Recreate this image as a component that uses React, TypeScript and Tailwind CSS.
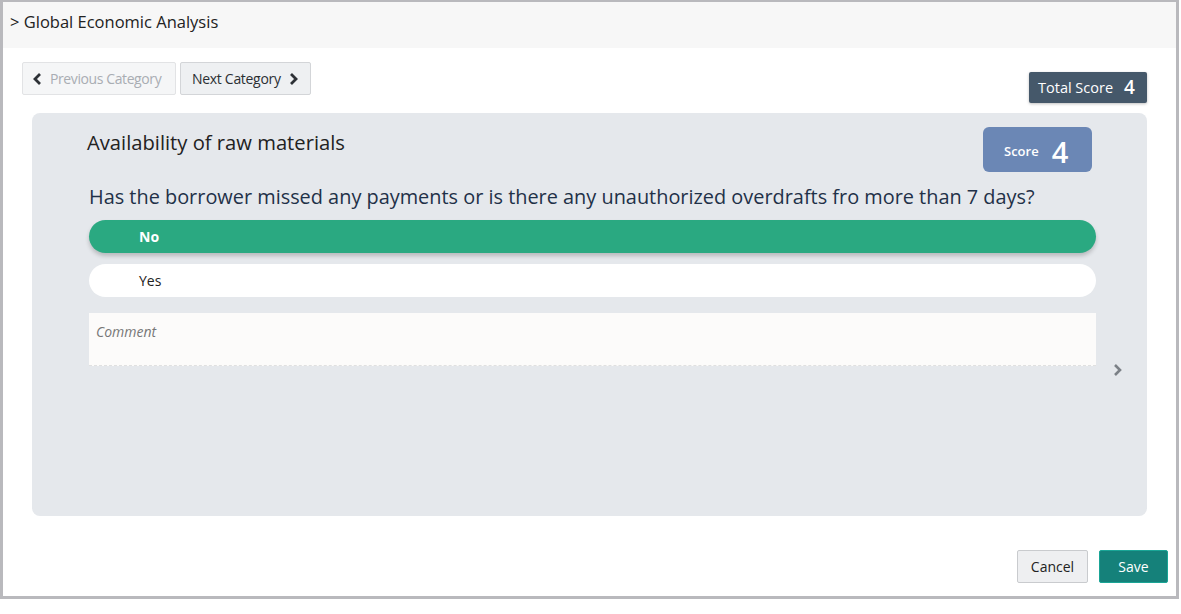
import React from "react";

const font = { fontFamily: '"Open Sans", "Noto Sans", sans-serif' };

export default function App() {
  return (
    <div className="w-[1181px] h-[614px] bg-white" style={font}>
      <div className="w-[1179px] h-[599px] border-l-[3px] border-r-[3px] border-t-2 border-b-[3px] border-[#b9b9bd] flex flex-col bg-white">
        <div className="h-[46px] bg-[#f7f7f7] flex items-center pl-[7px] pb-[5px] text-[16.5px] text-[#222]">
          &gt; Global Economic Analysis
        </div>
        <div className="pl-[19px] pr-[29px] pt-[14px]">
          <div className="flex items-start">
            <button className="h-[33px] w-[154px] flex items-center gap-[7px] pl-[9px] bg-[#f5f6f7] border border-[#e2e3e5] rounded-[2px] text-[14px] text-[#a9adb3] tracking-[-0.4px]">
              <svg width="11" height="14" viewBox="0 0 11 14"><path d="M8 2 L3 7 L8 12" stroke="#2d3136" strokeWidth="2.8" fill="none" /></svg>
              Previous Category
            </button>
            <button className="ml-[4px] h-[33px] w-[131px] flex items-center gap-[7px] pl-[11px] bg-[#eef0f2] border border-[#d3d5d8] rounded-[2px] text-[14px] text-[#2b2f33] tracking-[-0.3px]">
              Next Category
              <svg width="11" height="14" viewBox="0 0 11 14"><path d="M3 2 L8 7 L3 12" stroke="#2d3136" strokeWidth="2.8" fill="none" /></svg>
            </button>
            <div className="ml-auto mt-[10px] h-[31px] w-[118px] bg-[#45586a] rounded-[2px] shadow-[0_1px_3px_rgba(0,0,0,0.25)] flex items-center pl-[9px] text-white">
              <span className="text-[14.5px]">Total Score</span>
              <span className="ml-[11px] text-[19px] font-semibold">4</span>
            </div>
          </div>
          <div className="relative ml-[10px] mt-[10px] h-[403px] bg-[#e5e8ec] rounded-[8px] pt-[14px] pl-[57px] pr-[51px]">
            <div className="flex items-start justify-between">
              <div className="-ml-[2px] text-[20.2px] text-[#222]">Availability of raw materials</div>
              <div className="mr-[4px] h-[45px] w-[109px] bg-[#6b87b5] rounded-[6px] flex items-center pl-[21px] pt-[4px] text-white">
                <span className="text-[13px] font-semibold">Score</span>
                <span className="ml-[13px] text-[29px] font-semibold leading-none">4</span>
              </div>
            </div>
            <div className="mt-[12px] text-[19.9px] leading-[26px] text-[#1f3148]">
              Has the borrower missed any payments or is there any unauthorized overdrafts fro more than 7 days?
            </div>
            <div className="mt-[10px] h-[33px] rounded-full bg-[#2aa981] shadow-[0_3px_4px_rgba(0,0,0,0.2)] flex items-center pl-[50px] text-white text-[14px] font-bold">
              No
            </div>
            <div className="mt-[11px] h-[33px] rounded-full bg-white flex items-center pl-[50px] text-[#222] text-[14px]">
              Yes
            </div>
            <div className="mt-[16px] h-[53px] bg-[#fcfbfa] border-b border-dashed border-[#e0e0e0] pl-[7px] pt-[8px] text-[14px] italic text-[#777]">
              Comment
            </div>
            <svg className="absolute right-[23px] top-[250px]" width="12" height="14" viewBox="0 0 12 14">
              <path d="M3 2 L8 7 L3 12" stroke="#7c8187" strokeWidth="2.6" fill="none" />
            </svg>
          </div>
        </div>
        <div className="mt-[34px] flex justify-end gap-[11px] pr-[8px]">
          <button className="h-[33px] w-[71px] bg-[#eeeff1] border border-[#c9cbce] rounded-[2px] text-[14px] text-[#222]">Cancel</button>
          <button className="h-[33px] w-[69px] bg-[#15817a] border border-[#1aa596] rounded-[2px] text-[14px] text-white">Save</button>
        </div>
      </div>
    </div>
  );
}
